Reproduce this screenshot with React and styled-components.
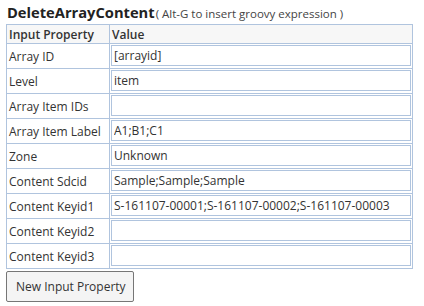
import React from "react";
import styled, { createGlobalStyle } from "styled-components";

const GlobalStyle = createGlobalStyle`
	body {
		margin: 0;
		padding: 0 6px;
		background: #ffffff;
		font-family: "Open Sans", "Liberation Sans", sans-serif;
		color: #333333;
	}
`;

const Panel = styled.div`
	display: flex;
	flex-direction: column;
	align-items: flex-start;
	width: 407px;
`;

const TitleLine = styled.div`
	display: flex;
	align-items: baseline;
	height: 24px;
	padding-left: 1px;
	white-space: nowrap;
`;

const Title = styled.span`
	font-size: 14.7px;
	font-weight: 700;
	color: #222222;
	line-height: 24px;
`;

const Hint = styled.span`
	font-size: 11.5px;
	color: #444444;
	margin-left: 1px;
`;

const Table = styled.table`
	border-collapse: collapse;
	width: 407px;
	border: 1px solid #b0c4de;
	font-size: 12px;
`;

const HeadCell = styled.th`
	background: #f7f7f7;
	border: 1px solid #b0c4de;
	text-align: left;
	font-weight: 600;
	height: 18px;
	padding: 0 2px;
	width: ${(p) => p.$width || "auto"};
`;

const LabelCell = styled.td`
	border: 1px solid #b0c4de;
	padding: 0 2px;
	height: 24px;
	white-space: nowrap;
`;

const ValueCell = styled.td`
	border: 1px solid #b0c4de;
	padding: 1px 1px 2px;
	height: 24px;
	box-sizing: border-box;
`;

const Field = styled.input`
	display: block;
	width: 100%;
	height: 21px;
	box-sizing: border-box;
	border: 1px solid #b0c4de;
	padding: 0 2px;
	font-family: inherit;
	font-size: 12px;
	color: #333333;
	outline: none;
`;

const Button = styled.button`
	margin-top: 2px;
	height: 31px;
	padding: 0 7px 0 9px;
	border: 1px solid #767676;
	border-radius: 2px;
	background: #f4f4f4;
	font-family: inherit;
	font-size: 12px;
	color: #333333;
`;

const rows = [
	["Array ID", "[arrayid]"],
	["Level", "item"],
	["Array Item IDs", ""],
	["Array Item Label", "A1;B1;C1"],
	["Zone", "Unknown"],
	["Content Sdcid", "Sample;Sample;Sample"],
	["Content Keyid1", "S-161107-00001;S-161107-00002;S-161107-00003"],
	["Content Keyid2", ""],
	["Content Keyid3", ""],
];

export default function App() {
	return (
		<>
			<GlobalStyle />
			<Panel>
				<TitleLine>
					<Title>DeleteArrayContent</Title>
					<Hint>( Alt-G to insert groovy expression )</Hint>
				</TitleLine>
				<Table>
					<thead>
						<tr>
							<HeadCell $width="98px">Input Property</HeadCell>
							<HeadCell>Value</HeadCell>
						</tr>
					</thead>
					<tbody>
						{rows.map(([label, value]) => (
							<tr key={label}>
								<LabelCell>{label}</LabelCell>
								<ValueCell>
									<Field defaultValue={value} />
								</ValueCell>
							</tr>
						))}
					</tbody>
				</Table>
				<Button>New Input Property</Button>
			</Panel>
		</>
	);
}
